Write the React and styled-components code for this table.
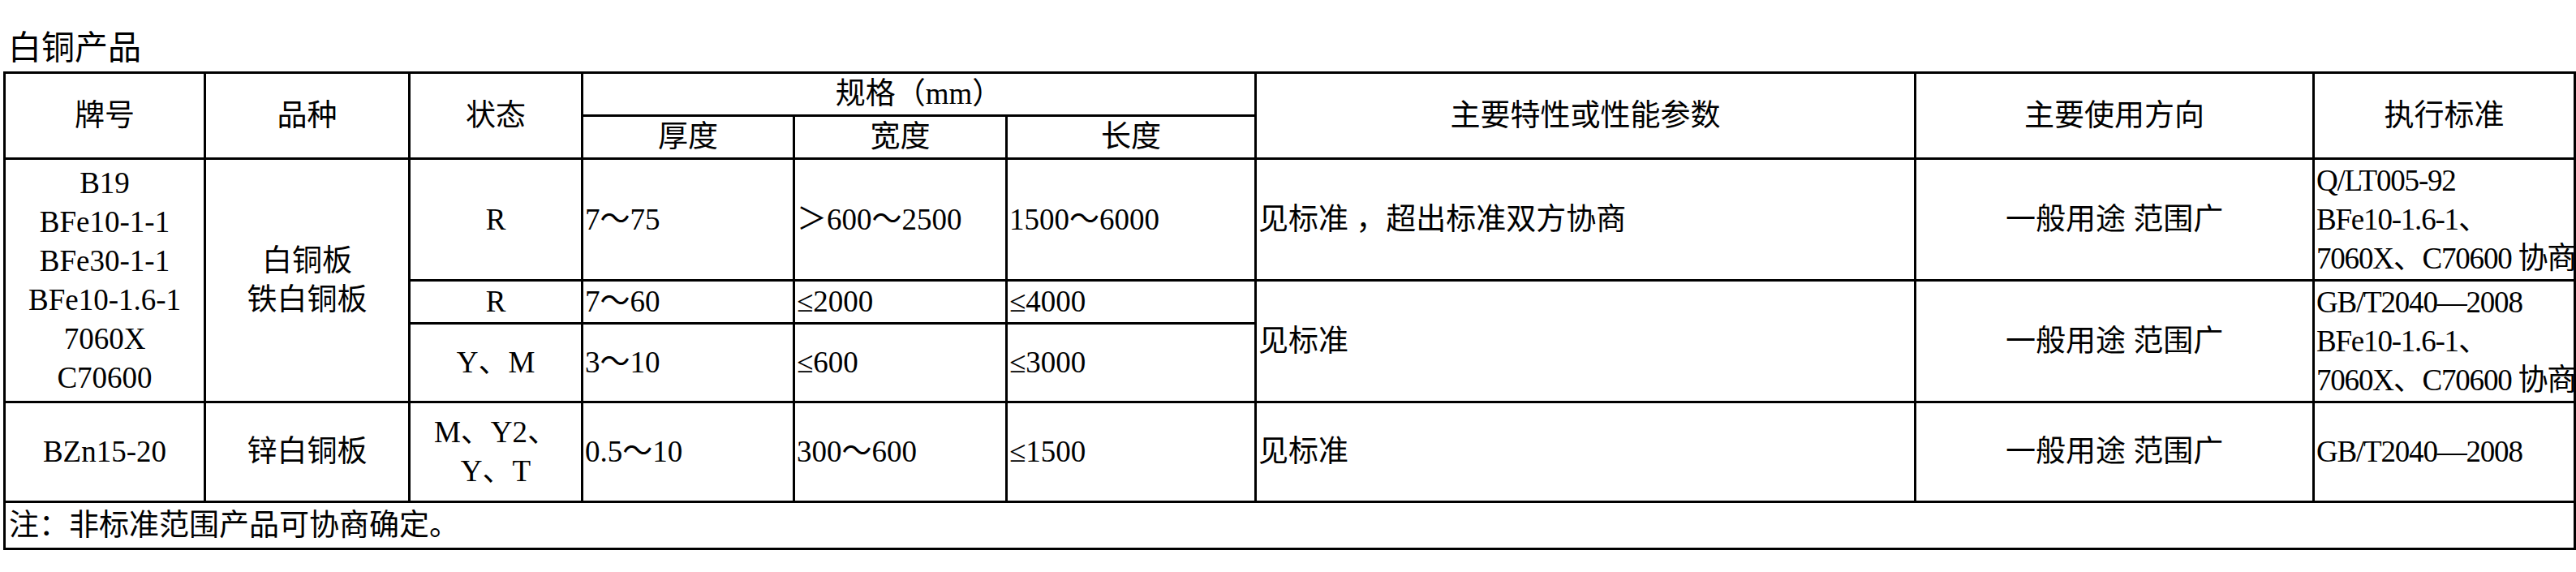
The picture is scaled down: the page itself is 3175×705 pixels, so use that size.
import React from 'react';
import styled, { createGlobalStyle } from 'styled-components';

// Global styles
const GlobalStyle = createGlobalStyle`
  * {
    margin: 0;
    padding: 0;
    box-sizing: border-box;
  }
  body {
    background: #fff;
    color: #000;
    font-family: 'Liberation Serif', 'Noto Sans CJK SC', serif;
    overflow: hidden;
  }
`;

const Page = styled.div`
  padding-left: 4px;
  width: 3175px;
`;

// Caption above the table
const Title = styled.div`
  font-size: 41px;
  line-height: 48px;
  padding-top: 35px;
  padding-left: 6px;
  margin-bottom: 5px;
`;

const SpecTable = styled.table`
  width: 3171px;
  table-layout: fixed;
  border-collapse: collapse;
  border: 3px solid #000;
  font-size: 37px;
`;

const Row = styled.tr`
  height: ${({ $h }) => $h}px;
`;

const HeadCell = styled.th`
  border: 3px solid #000;
  font-weight: normal;
  text-align: center;
  vertical-align: middle;
  line-height: 44px;
  padding: 0;
`;

const Cell = styled.td`
  border: 3px solid #000;
  text-align: ${({ $align }) => $align || 'left'};
  vertical-align: middle;
  line-height: 48px;
  padding: 0 2px;
  white-space: ${({ $nowrap }) => ($nowrap ? 'nowrap' : 'normal')};
  letter-spacing: ${({ $tight }) => ($tight ? '-1.2px' : 'normal')};
  overflow: visible;
`;

const Line = styled.div`
  line-height: 48px;
`;

const NoteCell = styled.td`
  border: 3px solid #000;
  text-align: left;
  vertical-align: middle;
  padding: 0 4px;
  line-height: 48px;
`;

const columns = [247, 252, 213, 261, 262, 307, 813, 491, 322];

const Lines = ({ items }) => items.map((t, i) => <Line key={i}>{t}</Line>);

const App = () => {
  return (
    <>
      <GlobalStyle />
      <Page>
        <Title>白铜产品</Title>
        <SpecTable>
          <colgroup>
            {columns.map((w, i) => (
              <col key={i} style={{ width: `${w}px` }} />
            ))}
          </colgroup>
          <thead>
            <Row $h={53}>
              <HeadCell rowSpan={2}>牌号</HeadCell>
              <HeadCell rowSpan={2}>品种</HeadCell>
              <HeadCell rowSpan={2}>状态</HeadCell>
              <HeadCell colSpan={3}>规格（mm）</HeadCell>
              <HeadCell rowSpan={2}>主要特性或性能参数</HeadCell>
              <HeadCell rowSpan={2}>主要使用方向</HeadCell>
              <HeadCell rowSpan={2}>执行标准</HeadCell>
            </Row>
            <Row $h={53}>
              <HeadCell>厚度</HeadCell>
              <HeadCell>宽度</HeadCell>
              <HeadCell>长度</HeadCell>
            </Row>
          </thead>
          <tbody>
            <Row $h={150}>
              <Cell rowSpan={3} $align="center">
                <Lines items={['B19', 'BFe10-1-1', 'BFe30-1-1', 'BFe10-1.6-1', '7060X', 'C70600']} />
              </Cell>
              <Cell rowSpan={3} $align="center">
                <Lines items={['白铜板', '铁白铜板']} />
              </Cell>
              <Cell $align="center">R</Cell>
              <Cell>7～75</Cell>
              <Cell>＞600～2500</Cell>
              <Cell>1500～6000</Cell>
              <Cell>见标准 ，超出标准双方协商</Cell>
              <Cell $align="center">一般用途 范围广</Cell>
              <Cell $nowrap $tight>
                <Lines items={['Q/LT005-92', 'BFe10-1.6-1、', '7060X、C70600 协商']} />
              </Cell>
            </Row>
            <Row $h={53}>
              <Cell $align="center">R</Cell>
              <Cell>7～60</Cell>
              <Cell>≤2000</Cell>
              <Cell>≤4000</Cell>
              <Cell rowSpan={2}>见标准</Cell>
              <Cell rowSpan={2} $align="center">一般用途 范围广</Cell>
              <Cell rowSpan={2} $nowrap $tight>
                <Lines items={['GB/T2040—2008', 'BFe10-1.6-1、', '7060X、C70600 协商']} />
              </Cell>
            </Row>
            <Row $h={97}>
              <Cell $align="center">Y、M</Cell>
              <Cell>3～10</Cell>
              <Cell>≤600</Cell>
              <Cell>≤3000</Cell>
            </Row>
            <Row $h={123}>
              <Cell $align="center">BZn15-20</Cell>
              <Cell $align="center">锌白铜板</Cell>
              <Cell $align="center">
                <Lines items={['M、Y2、', 'Y、T']} />
              </Cell>
              <Cell>0.5～10</Cell>
              <Cell>300～600</Cell>
              <Cell>≤1500</Cell>
              <Cell>见标准</Cell>
              <Cell $align="center">一般用途 范围广</Cell>
              <Cell $nowrap $tight>GB/T2040—2008</Cell>
            </Row>
            <Row $h={58}>
              <NoteCell colSpan={9}>注：非标准范围产品可协商确定。</NoteCell>
            </Row>
          </tbody>
        </SpecTable>
      </Page>
    </>
  );
};

export default App;
